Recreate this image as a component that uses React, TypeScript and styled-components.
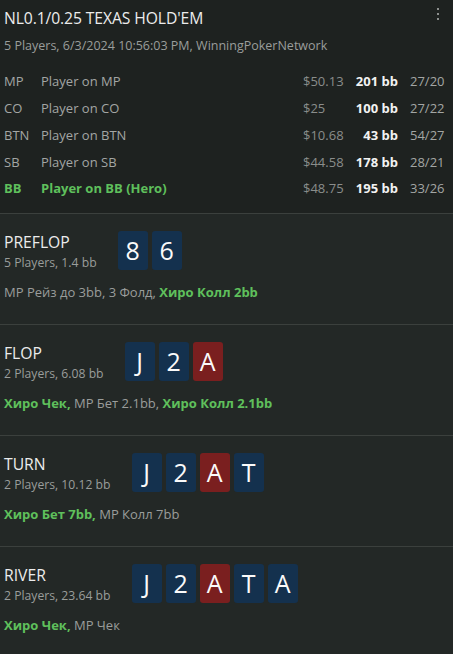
import React from "react";
import styled, { createGlobalStyle } from "styled-components";

const Global = createGlobalStyle`
  html, body { margin: 0; padding: 0; background: #232826; }
  body { font-family: "Open Sans", "Noto Sans", sans-serif; }
`;

const Page = styled.div`
  width: 453px;
  background: #232826;
  color: #e6e6e6;
`;

const Header = styled.div`
  position: relative;
  background: #1e2220;
  padding: 7px 6px 11px 4px;
  border-bottom: 1px solid #3b403d;
`;

const Title = styled.div`
  font-size: 15.7px;
  line-height: 22px;
  color: #ececec;
  letter-spacing: -0.1px;
`;

const Sub = styled.div`
  font-size: 12.5px;
  line-height: 20px;
  margin-top: 7px;
  color: #9a9d9b;
`;

const Kebab = styled.div`
  position: absolute;
  top: 8px;
  right: 14px;
  display: flex;
  flex-direction: column;
  gap: 3px;
  span {
    width: 2px;
    height: 2px;
    background: #8c8f8d;
  }
`;

const Players = styled.div`
  margin-top: 12px;
  display: grid;
  grid-template-columns: 37px 1fr 45px 50px 49px;
  grid-auto-rows: 26.75px;
  align-items: center;
  font-size: 13px;
`;

const Cell = styled.div<{ $hero?: boolean; $strong?: boolean; $dim?: boolean; $right?: boolean; $pad?: boolean }>`
  color: ${(p) => (p.$hero ? "#5fc05c" : p.$strong ? "#f2f2f2" : p.$dim ? "#8a8d8b" : "#a3a6a4")};
  font-weight: ${(p) => (p.$hero || p.$strong ? 700 : 400)};
  text-align: ${(p) => (p.$right ? "right" : "left")};
  padding-left: ${(p) => (p.$pad ? "12px" : "0")};
  white-space: nowrap;
`;

const Section = styled.div<{ $last?: boolean }>`
  padding: 17px 4px 22px 4px;
  border-bottom: ${(p) => (p.$last ? "none" : "1px solid #3b403d")};
`;

const Top = styled.div`
  display: flex;
  align-items: flex-start;
`;

const Street = styled.div`
  margin-top: 1px;
  margin-right: 21px;
`;

const StreetName = styled.div`
  font-size: 15.7px;
  line-height: 20px;
  color: #ececec;
`;

const StreetSub = styled.div`
  font-size: 12.2px;
  line-height: 22px;
  color: #9a9d9b;
`;

const Cards = styled.div`
  display: flex;
  gap: 4px;
`;

const Card = styled.div<{ $red?: boolean }>`
  width: 30px;
  height: 39px;
  border-radius: 3px;
  background: ${(p) => (p.$red ? "#7a1f1f" : "#14314e")};
  color: #fafafa;
  font-size: 25px;
  display: flex;
  align-items: center;
  justify-content: center;
`;

const Actions = styled.div`
  margin-top: 8px;
  font-size: 13px;
  line-height: 20px;
  color: #9a9d9b;
`;

const Hero = styled.span`
  color: #5fc05c;
  font-weight: 700;
`;

const players = [
  { pos: "MP", name: "Player on MP", money: "$50.13", bb: "201 bb", r: "27/20" },
  { pos: "CO", name: "Player on CO", money: "$25", bb: "100 bb", r: "27/22" },
  { pos: "BTN", name: "Player on BTN", money: "$10.68", bb: "43 bb", r: "54/27" },
  { pos: "SB", name: "Player on SB", money: "$44.58", bb: "178 bb", r: "28/21" },
  { pos: "BB", name: "Player on BB (Hero)", money: "$48.75", bb: "195 bb", r: "33/26", hero: true },
];

type Act = { t: string; hero?: boolean };
const streets: { name: string; sub: string; cards: { v: string; red?: boolean }[]; acts: Act[] }[] = [
  {
    name: "PREFLOP",
    sub: "5 Players, 1.4 bb",
    cards: [{ v: "8" }, { v: "6" }],
    acts: [{ t: "MP Рейз до 3bb, 3 Фолд, " }, { t: "Хиро Колл 2bb", hero: true }],
  },
  {
    name: "FLOP",
    sub: "2 Players, 6.08 bb",
    cards: [{ v: "J" }, { v: "2" }, { v: "A", red: true }],
    acts: [{ t: "Хиро Чек,", hero: true }, { t: " MP Бет 2.1bb, " }, { t: "Хиро Колл 2.1bb", hero: true }],
  },
  {
    name: "TURN",
    sub: "2 Players, 10.12 bb",
    cards: [{ v: "J" }, { v: "2" }, { v: "A", red: true }, { v: "T" }],
    acts: [{ t: "Хиро Бет 7bb,", hero: true }, { t: " MP Колл 7bb" }],
  },
  {
    name: "RIVER",
    sub: "2 Players, 23.64 bb",
    cards: [{ v: "J" }, { v: "2" }, { v: "A", red: true }, { v: "T" }, { v: "A" }],
    acts: [{ t: "Хиро Чек,", hero: true }, { t: " MP Чек" }],
  },
];

export default function App() {
  return (
    <Page>
      <Global />
      <Header>
        <Title>NL0.1/0.25 TEXAS HOLD'EM</Title>
        <Sub>5 Players, 6/3/2024 10:56:03 PM, WinningPokerNetwork</Sub>
        <Kebab>
          <span />
          <span />
          <span />
        </Kebab>
        <Players>
          {players.map((p) => (
            <React.Fragment key={p.pos}>
              <Cell $hero={p.hero}>{p.pos}</Cell>
              <Cell $hero={p.hero}>{p.name}</Cell>
              <Cell $dim>{p.money}</Cell>
              <Cell $strong $right>{p.bb}</Cell>
              <Cell $pad>{p.r}</Cell>
            </React.Fragment>
          ))}
        </Players>
      </Header>
      {streets.map((s, i) => (
        <Section key={s.name} $last={i === streets.length - 1}>
          <Top>
            <Street>
              <StreetName>{s.name}</StreetName>
              <StreetSub>{s.sub}</StreetSub>
            </Street>
            <Cards>
              {s.cards.map((c, j) => (
                <Card key={j} $red={c.red}>
                  {c.v}
                </Card>
              ))}
            </Cards>
          </Top>
          <Actions>
            {s.acts.map((a, j) => (a.hero ? <Hero key={j}>{a.t}</Hero> : <span key={j}>{a.t}</span>))}
          </Actions>
        </Section>
      ))}
    </Page>
  );
}
